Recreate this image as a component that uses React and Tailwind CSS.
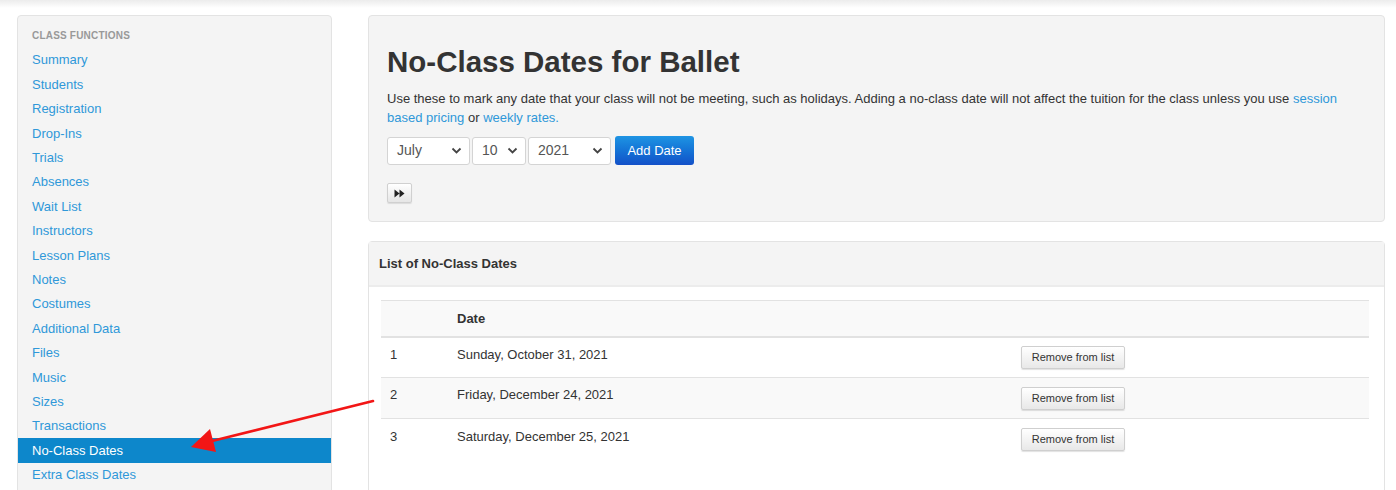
import React from 'react';

const NAV = [
  'Summary', 'Students', 'Registration', 'Drop-Ins', 'Trials', 'Absences', 'Wait List',
  'Instructors', 'Lesson Plans', 'Notes', 'Costumes', 'Additional Data', 'Files', 'Music',
  'Sizes', 'Transactions', 'No-Class Dates', 'Extra Class Dates',
];

const DATES = ['Sunday, October 31, 2021', 'Friday, December 24, 2021', 'Saturday, December 25, 2021'];

function Chevron() {
  return (
    <svg width="11" height="7" viewBox="0 0 11 7" className="shrink-0">
      <path d="M1.5 1.5 L5.5 5.5 L9.5 1.5" fill="none" stroke="#444" strokeWidth="1.8" />
    </svg>
  );
}

function FakeSelect({ value, width }) {
  return (
    <div
      className={`flex h-[28px] items-center justify-between rounded-[3px] border border-[#d4d4d4] bg-white pl-[9px] pr-[7px] text-[14px] text-[#555] ${width}`}
    >
      <span>{value}</span>
      <Chevron />
    </div>
  );
}

export default function App() {
  return (
    <div className="relative h-[490px] overflow-hidden bg-white font-['Liberation_Sans',Arial,sans-serif] text-[#333]">
      <div className="h-[8px] bg-gradient-to-b from-[#ececec] to-white" />
      <div className="flex gap-[36px] pl-[17px] pr-[11px] pt-[7px]">
        {/* sidebar */}
        <aside className="h-[520px] w-[315px] shrink-0 rounded-[4px] border border-[#e3e3e3] bg-[#f4f4f4] pt-[13px]">
          <div className="pl-[14px] text-[10px] font-bold uppercase leading-[14px] tracking-[0.2px] text-[#999]">
            Class Functions
          </div>
          <ul className="mt-[5px]">
            {NAV.map((item) => {
              const active = item === 'No-Class Dates';
              return (
                <li
                  key={item}
                  className={`flex h-[24.4px] items-center pl-[14px] text-[13px] ${
                    active ? 'bg-[#0d87cb] text-white' : 'text-[#2f98d9]'
                  }`}
                >
                  {item}
                </li>
              );
            })}
          </ul>
        </aside>

        {/* main */}
        <main className="flex min-w-0 flex-1 flex-col gap-[19px]">
          <section className="rounded-[4px] border border-[#e3e3e3] bg-[#f4f4f4] px-[18px] pb-[18px] pt-[29px]">
            <h1 className="text-[29.5px] font-bold leading-[34px] text-[#333]">No-Class Dates for Ballet</h1>
            <p className="mt-[10px] text-[13px] leading-[19px] text-[#333]">
              Use these to mark any date that your class will not be meeting, such as holidays. Adding a no-class date
              will not affect the tuition for the class unless you use{' '}
              <a className="text-[#2f98d9]">session based pricing</a> or{' '}
              <a className="text-[#2f98d9]">weekly rates.</a>
            </p>
            <div className="mt-[9px] flex items-center gap-[2px]">
              <FakeSelect value="July" width="w-[83px]" />
              <FakeSelect value="10" width="w-[54px]" />
              <FakeSelect value="2021" width="w-[83px]" />
              <button className="ml-[2px] h-[29px] w-[79px] rounded-[3px] bg-gradient-to-b from-[#1f94e3] to-[#1450c8] text-[13px] text-white">
                Add Date
              </button>
            </div>
            <button className="mt-[18px] flex h-[20px] w-[25px] items-center justify-center rounded-[2px] border border-[#d0d0d0] bg-gradient-to-b from-white to-[#e6e6e6] shadow-[0_1px_1px_rgba(0,0,0,0.1)]">
              <svg width="11" height="9" viewBox="0 0 11 9">
                <path d="M0.5 0.5 L5.5 4.5 L0.5 8.5 Z M5.5 0.5 L10.5 4.5 L5.5 8.5 Z" fill="#222" />
              </svg>
            </button>
          </section>

          <section className="h-[300px] rounded-[4px] border border-[#e3e3e3] bg-white">
            <div className="flex h-[45px] items-center border-b-2 border-[#ececec] bg-[#f4f4f4] px-[10px] text-[13px] font-bold text-[#333]">
              List of No-Class Dates
            </div>
            <div className="pl-[12px] pr-[15px] pt-[13px]">
              <table className="w-full border-collapse text-[13px] text-[#333]">
                <thead>
                  <tr className="h-[36px] border-t border-b-2 border-[#e2e2e2] bg-[#f9f9f9]">
                    <th className="w-[76px]" />
                    <th className="px-0 text-left font-bold">Date</th>
                    <th className="w-[357px]" />
                  </tr>
                </thead>
                <tbody>
                  {DATES.map((d, i) => (
                    <tr
                      key={d}
                      className={`h-[41px] border-b border-[#e2e2e2] last:border-b-0 ${i === 1 ? 'bg-[#f9f9f9]' : 'bg-white'}`}
                    >
                      <td className="pb-[6px] pl-[9px] align-middle">{i + 1}</td>
                      <td className="pb-[6px] align-middle">{d}</td>
                      <td className="pl-[9px] align-middle">
                        <button className="h-[23px] w-[104px] rounded-[2px] border border-[#cfcfcf] bg-gradient-to-b from-white to-[#e8e8e8] text-[11px] text-[#333] shadow-[0_1px_1px_rgba(0,0,0,0.12)]">
                          Remove from list
                        </button>
                      </td>
                    </tr>
                  ))}
                </tbody>
              </table>
            </div>
          </section>
        </main>
      </div>

      {/* annotation arrow */}
      <svg className="pointer-events-none absolute left-0 top-0" width="1396" height="490">
        <line x1="373" y1="401" x2="208" y2="442" stroke="#f21616" strokeWidth="2.6" strokeLinecap="round" />
        <polygon points="191,447 210,429 216,452" fill="#f21616" />
      </svg>
    </div>
  );
}
